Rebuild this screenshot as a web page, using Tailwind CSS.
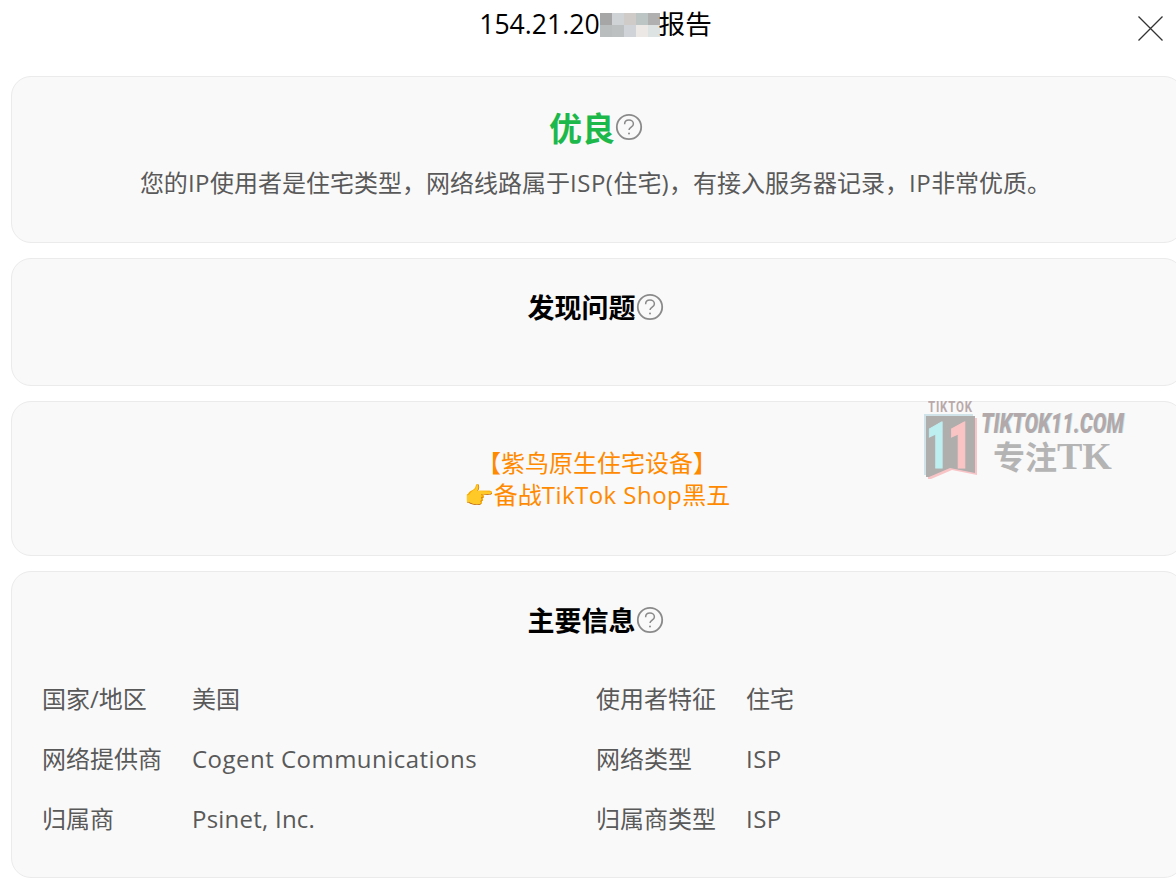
<!DOCTYPE html>
<html lang="zh-CN">
<head>
  <meta charset="UTF-8">
  <meta name="viewport" content="width=device-width, initial-scale=1.0">
  <title>IP报告</title>
  <script src="https://cdn.jsdelivr.net/npm/@tailwindcss/browser@4"></script>
</head>
<body class="bg-white">
  <div class="relative w-[1176px] h-[878px] overflow-hidden font-['Open_Sans','Noto_Sans_CJK_SC',sans-serif] text-[24px] text-[#595959]">

    <!-- header -->
    <div class="relative w-[1191px] h-[76px] pt-[5px] flex justify-center items-start text-[26.6px] leading-[38px] text-black">
      <span>154.21.20</span>
      <span class="grid grid-cols-[repeat(5,12px)] grid-rows-[repeat(2,12px)] mt-[8px] mr-[-1px]">
        <i class="bg-[#a6a6a6]"></i><i class="bg-[#cfd3d6]"></i><i class="bg-[#cfcbc9]"></i><i class="bg-[#bcc4c4]"></i><i class="bg-[#b0b0b0]"></i>
        <i class="bg-[#b9bdbd]"></i><i class="bg-[#bcc0c0]"></i><i class="bg-[#d0d4d8]"></i><i class="bg-[#ece8e5]"></i><i class="bg-[#dde3e2]"></i>
      </span>
      <span>报告</span>
    </div>
    <svg class="absolute left-[1138px] top-[16px] w-[25px] h-[25px]" viewBox="0 0 25 25" fill="none" stroke="#333" stroke-width="1.3"><path d="M0.5 0.5L24.5 24.5M24.5 0.5L0.5 24.5"/></svg>

    <div class="ml-[11px] w-[1173px] flex flex-col gap-[15px]">
      <!-- score -->
      <section class="h-[167px] rounded-[20px] border border-[#ebebeb] bg-[#f9f9f9] pt-[29px] flex flex-col items-center">
        <div class="flex items-center h-[46px] mr-[3px]">
          <h2 class="text-[33px] leading-[46px] font-bold text-[#1db84a]">优良</h2>
          <svg class="w-[28px] h-[28px] mt-[-5px]" viewBox="0 0 28 28" fill="none" stroke="#8a8a8a" stroke-width="1.8"><circle cx="14" cy="14" r="12.2"/><path d="M9.6 11.2c0-2.6 2-4.2 4.4-4.2s4.4 1.6 4.4 3.9c0 3.2-4.4 3.2-4.4 6.2" stroke-width="1.5"/><circle cx="14" cy="20.6" r="1" fill="#8a8a8a" stroke="none"/></svg>
        </div>
        <p class="mt-[14px] mr-[4px] leading-[34px]">您的<span class="tracking-[0.5px]">IP</span>使用者是住宅类型，网络线路属于<span class="tracking-[0.5px]">ISP(</span>住宅<span class="tracking-[0.5px]">)</span>，有接入服务器记录，<span class="tracking-[0.5px]">IP</span>非常优质。</p>
      </section>

      <!-- problems -->
      <section class="h-[128px] rounded-[20px] border border-[#ebebeb] bg-[#f9f9f9] pt-[29px] pr-[4px] flex justify-center items-start">
        <h2 class="text-[27px] leading-[40px] font-bold text-black">发现问题</h2>
        <svg class="w-[28px] h-[28px] mt-[5px]" viewBox="0 0 28 28" fill="none" stroke="#8a8a8a" stroke-width="1.8"><circle cx="14" cy="14" r="12.2"/><path d="M9.6 11.2c0-2.6 2-4.2 4.4-4.2s4.4 1.6 4.4 3.9c0 3.2-4.4 3.2-4.4 6.2" stroke-width="1.5"/><circle cx="14" cy="20.6" r="1" fill="#8a8a8a" stroke="none"/></svg>
      </section>

      <!-- promo -->
      <section class="h-[155px] rounded-[20px] border border-[#ebebeb] bg-[#f9f9f9] pt-[44px] text-center text-[#ff8a00] leading-[33px]">
        <p class="mr-[1px]">【紫鸟原生住宅设备】</p>
        <p class="mr-[1px] -mt-px">👉备战<span class="tracking-[0.45px]">TikTok Shop</span>黑五</p>
      </section>

      <!-- main info -->
      <section class="h-[307px] rounded-[20px] border border-[#ebebeb] bg-[#f9f9f9] pt-[29px]">
        <div class="flex justify-center items-start pr-[4px]">
          <h2 class="text-[27px] leading-[40px] font-bold text-black">主要信息</h2>
          <svg class="w-[28px] h-[28px] mt-[5px]" viewBox="0 0 28 28" fill="none" stroke="#8a8a8a" stroke-width="1.8"><circle cx="14" cy="14" r="12.2"/><path d="M9.6 11.2c0-2.6 2-4.2 4.4-4.2s4.4 1.6 4.4 3.9c0 3.2-4.4 3.2-4.4 6.2" stroke-width="1.5"/><circle cx="14" cy="20.6" r="1" fill="#8a8a8a" stroke="none"/></svg>
        </div>
        <div class="mt-[28px] ml-[30px] grid grid-cols-[150px_404px_150px_1fr] auto-rows-[60px] leading-[60px]">
          <span>国家/地区</span><span>美国</span><span>使用者特征</span><span>住宅</span>
          <span>网络提供商</span><span class="tracking-[0.48px]">Cogent Communications</span><span>网络类型</span><span class="tracking-[0.48px]">ISP</span>
          <span>归属商</span><span class="tracking-[0.23px]">Psinet, Inc.</span><span>归属商类型</span><span class="tracking-[0.48px]">ISP</span>
        </div>
      </section>
    </div>

    <!-- watermark -->
    <div class="absolute left-[922px] top-[400px] w-[210px] h-[80px]">
      <span class="absolute left-[6px] top-[2px] text-[14px] leading-[10px] font-bold origin-left scale-x-[0.82] tracking-[1px] font-['Roboto',sans-serif] text-[#b9a9ab]">TIKTOK</span>
      <svg class="absolute left-0 top-[12px] w-[58px] h-[68px] overflow-visible" viewBox="0 0 58 68">
        <path d="M2 2H51V59L26 54L5 63H2Z" fill="#cfe3e8"/>
        <path d="M6 6H55V63L30 58L9 67H6Z" fill="#f9c4c6"/>
        <path d="M4 4H53V61L28 56L7 65H4Z" fill="#b0adad"/>
        <text x="4" y="56" textLength="23" lengthAdjust="spacingAndGlyphs" font-family="Roboto,sans-serif" font-weight="900" font-size="64" fill="#bdeef0" stroke="#bdeef0">1</text>
        <text x="26" y="56" textLength="24" lengthAdjust="spacingAndGlyphs" font-family="Roboto,sans-serif" font-weight="900" font-size="64" fill="#fbc4c4" stroke="#fbc4c4">1</text>
      </svg>
      <span class="absolute left-[59px] top-[13px] text-[28px] leading-[21px] font-black italic origin-left scale-x-[0.73] font-['Roboto',sans-serif] text-[#b3a8aa] [text-shadow:1px_0_0_#bfe8ea]">TIKTOK11.COM</span>
      <span class="absolute left-[71px] top-[36px] text-[32px] leading-[40px] font-bold font-['Liberation_Serif','Noto_Sans_CJK_SC',serif] text-[#b4b4b4]">专注<span class="text-[38px]">TK</span></span>
    </div>
  </div>
</body>
</html>
